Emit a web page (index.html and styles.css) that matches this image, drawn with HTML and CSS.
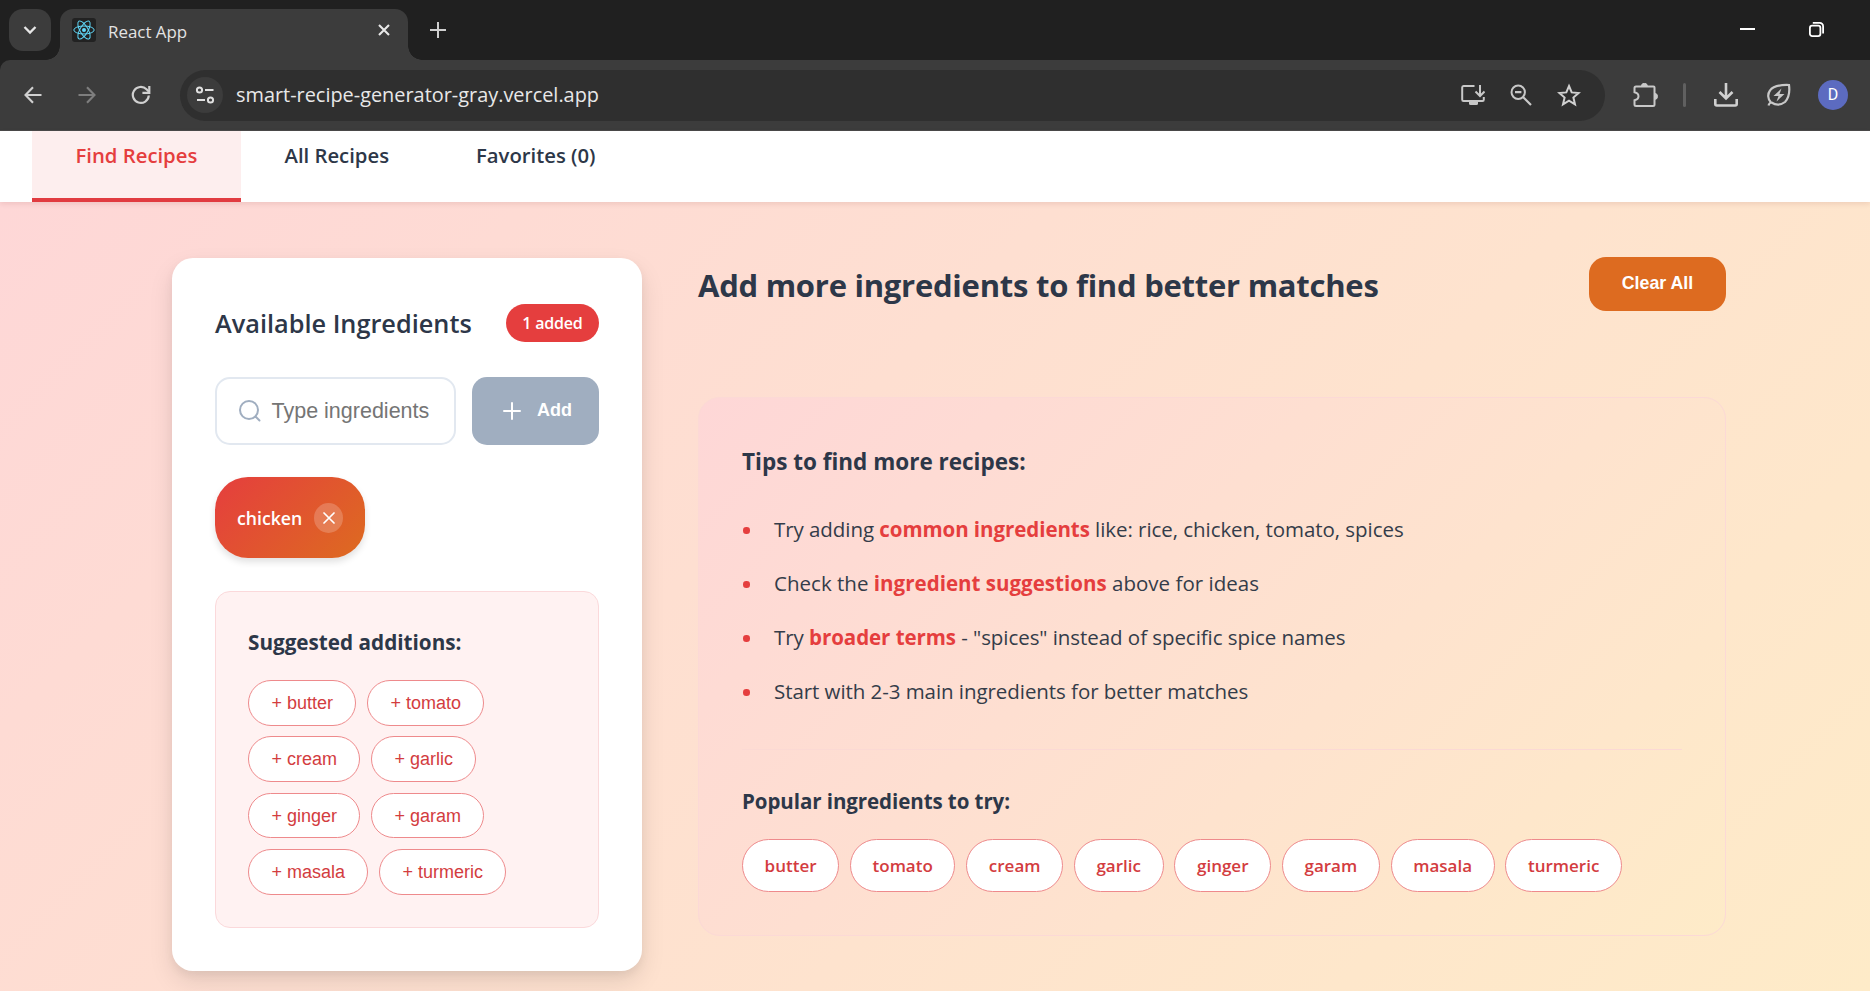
FILE: index.html
```html
<!DOCTYPE html>
<html lang="en">
<head>
<meta charset="utf-8">
<title>React App</title>
<link rel="stylesheet" href="styles.css">
</head>
<body>
<header class="tabstrip">
  <button class="tab-search"><svg width="14" height="10" viewBox="0 0 14 10"><path d="M1.500 2l5.500 5.500L12.500 2" fill="none" stroke="#e6e6e6" stroke-width="2.300"/></svg></button>
  <div class="tab">
    <svg class="favicon" width="24" height="24" viewBox="0 0 24 24"><rect width="24" height="24" rx="3" fill="#222"/><g fill="none" stroke="#61dafb" stroke-width="1"><ellipse cx="12" cy="12" rx="10.200" ry="4"/><ellipse cx="12" cy="12" rx="10.200" ry="4" transform="rotate(60 12 12)"/><ellipse cx="12" cy="12" rx="10.200" ry="4" transform="rotate(120 12 12)"/></g><circle cx="12" cy="12" r="2" fill="#61dafb"/></svg>
    <span class="tab-title">React App</span>
    <svg class="tab-close" width="12" height="12" viewBox="0 0 12 12"><path d="M1 1l10 10M11 1L1 11" stroke="#e8e8e8" stroke-width="2.100"/></svg>
  </div>
  <svg class="new-tab" width="16" height="16" viewBox="0 0 16 16"><path d="M8 0v16M0 8h16" stroke="#d0d0d0" stroke-width="2"/></svg>
  <div class="window-controls">
    <svg width="15" height="16" viewBox="0 0 15 16"><path d="M0 7h15" stroke="#fff" stroke-width="2"/></svg>
    <svg width="15" height="15" viewBox="0 0 15 15"><g fill="none" stroke="#fff" stroke-width="1.800"><rect x=".9" y="3.600" width="10.500" height="10.500" rx="2.300"/><path d="M3.800 .9h7a3.300 3.300 0 0 1 3.300 3.300V11.500"/></g></svg>
  </div>
</header>
<div class="toolbar-wrap">
<div class="toolbar">
  <svg class="back" width="18" height="18" viewBox="0 0 18 18"><path d="M17.500 9H1.500M9 1.200L1.500 9L9 16.800" fill="none" stroke="#d0d0d0" stroke-width="2.100"/></svg>
  <svg class="forward" width="18" height="18" viewBox="0 0 18 18"><path d="M.5 9h16M9 1.200L16.500 9L9 16.800" fill="none" stroke="#7e7e7e" stroke-width="2.100"/></svg>
  <svg class="reload" width="20" height="20" viewBox="0 0 20 20"><path d="M17.800 10.500A8 8 0 1 1 15.500 4.300L18 6.800" fill="none" stroke="#d0d0d0" stroke-width="2.200"/><path d="M18.300 1v6.900h-6.900" fill="none" stroke="#d0d0d0" stroke-width="2.200"/></svg>
  <div class="omnibox">
    <span class="site-info"><svg width="20" height="18" viewBox="0 0 20 18"><g fill="none" stroke="#e0e0e0" stroke-width="2"><circle cx="4.500" cy="4" r="2.600"/><path d="M10 4h8.500M2 14h8"/><circle cx="15.500" cy="14" r="2.600"/></g></svg></span>
    <span class="url">smart-recipe-generator-gray.vercel.app</span>
    <div class="omni-actions">
      <svg width="24" height="24" viewBox="0 0 24 24"><g fill="none" stroke="#c8c8c8" stroke-width="2"><path d="M13.500 3H2.500Q1.200 3 1.200 4.500v12Q1.200 18 2.500 18h19q1.300 0 1.300-1.500V14"/><path d="M19 2v11M14.500 8.500l4.500 4.500l4.500-4.500"/></g><path d="M8 18h9v2.500q0 1.500-1.500 1.500h-6Q8 22 8 20.500z" fill="#c8c8c8"/></svg>
      <svg width="22" height="22" viewBox="0 0 22 22"><g fill="none" stroke="#c8c8c8" stroke-width="2"><circle cx="8.200" cy="8.200" r="6.700"/><path d="M13 13l8 8M5 8.200h6.400" stroke-width="2.200"/></g></svg>
      <svg width="24" height="24" viewBox="0 0 24 24"><path d="M12 3l2.700 6.400 6.900.6-5.200 4.500 1.600 6.800-6-3.600-6 3.600 1.600-6.800L2.400 10l6.900-.6z" fill="none" stroke="#d0d0d0" stroke-width="2"/></svg>
    </div>
  </div>
  <div class="tools">
    <svg width="25" height="25" viewBox="0 0 25 25"><path d="M3 3.500h17.500q1 0 1 1v17q0 1.500-1.500 1.500H3q-1.500 0-1.500-1.500v-4.200q4-.8 4-4t-4-4V5Q1.500 3.500 3 3.500z" fill="none" stroke="#c8c8c8" stroke-width="2"/><path d="M8.500 3a2.900 2.700 0 0 1 5.800 0zM22 10.500a2.500 2.900 0 0 1 0 5.800z" fill="#c8c8c8" stroke="#c8c8c8"/></svg>
    <span class="divider"></span>
    <svg width="24" height="24" viewBox="0 0 24 24"><path d="M12 0v15M5.500 9l6.500 6.500L18.500 9M1.300 16v5q0 1.500 1.500 1.500h18.400q1.500 0 1.500-1.500v-5" fill="none" stroke="#d0d0d0" stroke-width="2.600"/></svg>
    <svg width="24" height="24" viewBox="0 0 24 24"><path d="M1.500 22.500q.5-2 2.300-3.200A9.200 9.200 0 0 1 3 7.500Q7 1.500 22 2Q23.500 13 18 19Q11.500 24 4.500 19.500" fill="none" stroke="#c8c8c8" stroke-width="2.200"/><path d="M14.500 5.500L6.500 13h5L9.500 18.500L17.500 11h-5z" fill="#c8c8c8"/></svg>
    <span class="avatar">D</span>
  </div>
</div>
</div>
<nav class="nav">
  <a class="nav-item active">Find Recipes</a>
  <a class="nav-item">All Recipes</a>
  <a class="nav-item">Favorites (0)</a>
</nav>
<main class="page">
  <section class="card">
    <div class="card-head"><h2 class="card-title">Available Ingredients</h2><span class="badge">1 added</span></div>
    <div class="entry">
      <div class="field"><svg width="22" height="22" viewBox="0 0 22 22"><g fill="none" stroke="#a0aec0" stroke-width="2" stroke-linecap="round"><circle cx="10" cy="10" r="9"/><path d="M16.500 16.500l4 4"/></g></svg><span class="placeholder">Type ingredients</span></div>
      <button class="add"><svg width="18" height="18" viewBox="0 0 18 18"><path d="M9 1v16M1 9h16" stroke="#fff" stroke-width="2" stroke-linecap="round"/></svg><span>Add</span></button>
    </div>
    <div class="chip"><span>chicken</span><span class="chip-x"><svg width="12" height="12" viewBox="0 0 12 12"><path d="M1 1l10 10M11 1L1 11" stroke="#fff" stroke-width="1.700" stroke-linecap="round"/></svg></span></div>
    <div class="suggest">
      <h4 class="suggest-title">Suggested additions:</h4>
      <div class="pills">
        <button class="pill">+ butter</button><button class="pill">+ tomato</button>
        <button class="pill">+ cream</button><button class="pill">+ garlic</button>
        <button class="pill">+ ginger</button><button class="pill">+ garam</button>
        <button class="pill">+ masala</button><button class="pill">+ turmeric</button>
      </div>
    </div>
  </section>
  <section class="results">
    <div class="results-head"><h2 class="headline">Add more ingredients to find better matches</h2><button class="clear">Clear All</button></div>
    <div class="tips">
      <h3 class="tips-title">Tips to find more recipes:</h3>
      <ul class="tips-list">
        <li>Try adding <b>common ingredients</b> like: rice, chicken, tomato, spices</li>
        <li class="loose">Check the <b>ingredient suggestions</b> above for ideas</li>
        <li>Try <b>broader terms</b> - "spices" instead of specific spice names</li>
        <li>Start with 2-3 main ingredients for better matches</li>
      </ul>
      <div class="popular">
        <h4 class="popular-title">Popular ingredients to try:</h4>
        <div class="tags"><span class="tag">butter</span><span class="tag">tomato</span><span class="tag">cream</span><span class="tag">garlic</span><span class="tag">ginger</span><span class="tag">garam</span><span class="tag">masala</span><span class="tag">turmeric</span></div>
      </div>
    </div>
  </section>
</main>
</body>
</html>
```
FILE: styles.css
```css
* { box-sizing: border-box; }
body { margin: 0; height: 991px; overflow: hidden; display: flex; flex-direction: column; font-family: "Open Sans", "Noto Sans", sans-serif; color: #2d3748; }
svg { display: block; flex: none; }
h2, h3, h4, ul { margin: 0; padding: 0; font-weight: 600; }
button { border: 0; margin: 0; padding: 0; font-family: "Liberation Sans", Arial, sans-serif; }
span { white-space: nowrap; }

.tabstrip { flex: none; height: 60px; background: #202020; display: flex; align-items: flex-start; padding: 9px 46px 0 9px; }
.tab-search { width: 42px; height: 42px; border-radius: 14px; background: #3c3c3c; display: flex; align-items: center; justify-content: center; }
.tab { position: relative; width: 348px; height: 51px; margin-left: 9px; padding: 0 18px 9px 12px; background: #3c3c3c; border-radius: 13px 13px 0 0; display: flex; align-items: center; }
.tab::before, .tab::after { content: ""; position: absolute; bottom: 0; width: 14px; height: 14px; }
.tab::before { right: 100%; background: radial-gradient(circle at 0 0, transparent 13.500px, #3c3c3c 14px); }
.tab::after { left: 100%; background: radial-gradient(circle at 100% 0, transparent 13.500px, #3c3c3c 14px); }
.tab-title { margin: 3px auto 0 12px; font-size: 16.900px; color: #e3e3e3; }
.new-tab { margin: 13px 0 0 22px; }
.window-controls { margin: 13px 0 0 auto; display: flex; gap: 54px; }

.toolbar-wrap { flex: none; background: #202020; }
.toolbar { height: 71px; background: #3c3c3c; border-bottom: 1px solid #4a4a4a; display: flex; align-items: center; padding: 0 22px 0 24px; border-top-left-radius: 10px; }
.forward { margin-left: 36px; }
.reload { margin-left: 35px; }
.omnibox { margin-left: 29px; width: 1425px; height: 51px; border-radius: 26px; background: #2f2f2f; display: flex; align-items: center; padding: 0 24px 0 7px; }
.site-info { width: 36px; height: 36px; border-radius: 50%; background: #3c3c3c; display: flex; align-items: center; justify-content: center; }
.url { margin: 0 0 2px 13px; font-size: 19.900px; color: #e8e8e8; }
.omni-actions { margin-left: auto; display: flex; align-items: center; gap: 25px; }
.tools { margin-left: auto; display: flex; align-items: center; }
.divider { width: 3px; height: 24px; border-radius: 2px; background: #606060; margin: 0 28px 0 25px; }
.tools svg + svg { margin-left: 29px; }
.avatar { width: 30px; height: 30px; margin-left: 27px; border-radius: 50%; background: #5c6bc0; color: #fff; font: 16px/30px Roboto, sans-serif; text-align: center; }

.nav { flex: none; position: relative; height: 71px; padding-left: 32px; background: #fff; display: flex; box-shadow: 0 2px 5px rgba(110, 20, 20, .1); }
.nav-item { padding: 8px 43.500px 0; font-size: 20.300px; line-height: 32px; font-weight: 600; white-space: nowrap; }
.nav-item.active { width: 209px; background: #fdeeee; border-bottom: 4px solid #e13b40; color: #e53e3e; }

.page { flex: 1; background: linear-gradient(135deg, #fed7d7 0%, #feebc8 100%); padding: 55px 144px 0 172px; display: flex; gap: 56px; align-items: flex-start; }
.card { width: 470px; height: 713px; margin-top: 1px; border-radius: 21px; background: #fff; padding: 46px 43px 43px; box-shadow: 0 11px 25px rgba(0, 0, 0, .1), 0 4px 10px rgba(0, 0, 0, .05); }
.card-head { height: 38px; display: flex; align-items: center; justify-content: space-between; }
.card-title { font-size: 25.300px; line-height: 38px; font-weight: 600; }
.badge { width: 93px; height: 38px; border-radius: 19px; background: #e53e3e; color: #fff; font-size: 16px; letter-spacing: -.2px; font-weight: 600; line-height: 39px; text-align: center; }
.entry { margin-top: 35px; display: flex; justify-content: space-between; }
.field { width: 241px; height: 68px; border: 2px solid #e2e8f0; border-radius: 15px; display: flex; align-items: center; padding-left: 21.500px; }
.placeholder { margin-left: 11px; font: 21.500px "Liberation Sans", Arial, sans-serif; color: #757575; }
.add { width: 127px; height: 68px; border-radius: 15px; background: #a0aec0; color: #fff; font-size: 18px; font-weight: 700; display: flex; align-items: center; padding: 0 0 1px 31px; gap: 16px; }
.chip { margin-top: 32px; width: 150px; height: 81px; border-radius: 33px; background: linear-gradient(135deg, #e53e3e, #dd6b20); color: #fff; font-size: 17.700px; font-weight: 600; display: flex; align-items: center; padding: 0 22px; justify-content: space-between; box-shadow: 0 4px 7px rgba(0, 0, 0, .12); }
.chip-x { width: 29px; height: 30px; border-radius: 50%; background: rgba(255, 255, 255, .2); display: flex; align-items: center; justify-content: center; }
.suggest { margin-top: 33px; height: 337px; border: 1px solid #fbd9db; border-radius: 15px; background: #fff2f2; padding: 32px; }
.suggest-title { font-size: 20.700px; line-height: 36px; font-weight: 700; }
.pills { margin-top: 20px; display: flex; flex-wrap: wrap; gap: 10.800px; }
.pill { height: 45.600px; padding: 1px 22.400px 0; border: 1px solid #ee8a8c; border-radius: 23px; background: #fff; color: #d33c40; font-size: 18px; }

.results { flex: 1; }
.results-head { display: flex; justify-content: space-between; align-items: flex-start; height: 140px; }
.headline { font-size: 31px; line-height: 56px; font-weight: 700; letter-spacing: -.25px; }
.clear { width: 137px; height: 54px; border-radius: 17px; background: #dd6b20; color: #fff; font-size: 17.800px; font-weight: 700; padding-bottom: 2px; }
.tips { height: 539px; border: 1px solid #fcd9d6; border-radius: 22px; background: linear-gradient(135deg, #fed7d7 0%, #feebc8 100%); padding: 43px; }
.tips-title { font-size: 22.500px; line-height: 42px; font-weight: 700; }
.tips-list { list-style: none; margin-top: 19px; }
.tips-list li { position: relative; height: 54px; line-height: 54px; padding-left: 32px; font-size: 20.500px; letter-spacing: -.06px; font-weight: 400; color: #343c49; }
.tips-list li.loose { letter-spacing: .02px; }
.tips-list li::before { content: ""; position: absolute; left: 1px; top: 25px; width: 6.500px; height: 6.500px; border-radius: 50%; background: #e53e3e; }
.tips-list b { color: #e53e3e; font-weight: 700; }
.popular { margin-top: 31px; border-top: 1px solid #fbd9d4; padding-top: 31px; }
.popular-title { font-size: 20.500px; line-height: 40px; font-weight: 700; letter-spacing: -.07px; }
.tags { margin-top: 18px; display: flex; gap: 10.800px; }
.tag { height: 53px; line-height: 51px; border: 1px solid #ee8a8c; border-radius: 27px; background: #fff; color: #d33c40; padding: 0 21.600px; font-size: 17px; font-weight: 600; }
```
